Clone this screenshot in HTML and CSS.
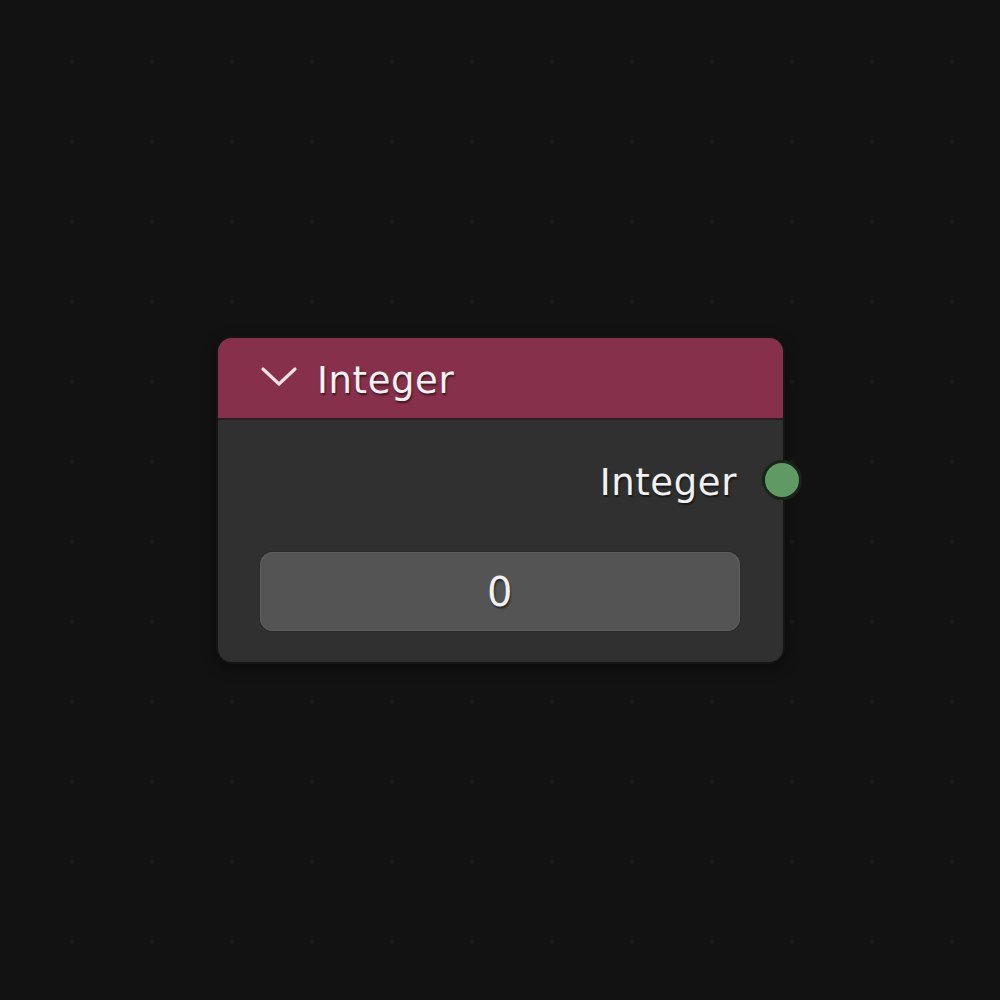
FILE: index.html
```html
<!DOCTYPE html>
<html>
<head>
<meta charset="utf-8">
<link rel="stylesheet" href="styles.css">
</head>
<body>
<div class="canvas">
  <div class="node">
    <div class="node-header">
      <svg class="chevron" width="38" height="22" viewBox="0 0 38 22"><path d="M3 3 L19 18 L35 3" fill="none" stroke="#ecdfe4" stroke-width="3.2" stroke-linecap="round" stroke-linejoin="round"/></svg>
      <span class="title">Integer</span>
    </div>
    <div class="node-body">
      <div class="output-row">
        <span class="label">Integer</span>
        <span class="socket"></span>
      </div>
      <div class="field">0</div>
    </div>
  </div>
</div>
</body>
</html>
```
FILE: styles.css
```css
html, body {
  margin: 0;
  padding: 0;
}
body {
  width: 1000px;
  height: 1000px;
  background-color: #121212;
  background-image: radial-gradient(circle at center, #1a1a1a 0, #1a1a1a 2.2px, transparent 2.8px);
  background-size: 80px 80px;
  background-position: 32px 22px;
  font-family: "DejaVu Sans", "Liberation Sans", sans-serif;
  overflow: hidden;
}
.canvas {
  position: relative;
  width: 1000px;
  height: 1000px;
}
.node {
  position: absolute;
  left: 218px;
  top: 338px;
  width: 565px;
  height: 324px;
  border-radius: 14px;
  background: #303030;
  box-shadow: 0 0 0 2px #151515, 0 4px 14px rgba(0,0,0,0.6);
  display: flex;
  flex-direction: column;
}
.node-header {
  height: 80px;
  background: #87304c;
  border-radius: 14px 14px 0 0;
  border-bottom: 2px solid #2a2022;
  display: flex;
  align-items: center;
  padding-left: 42px;
  gap: 19px;
}
.chevron {
  display: block;
  margin-top: -2px;
}
.title, .label, .field {
  color: #f0f0f0;
  font-size: 37px;
  letter-spacing: 0.6px;
  text-shadow: 1px 2px 2px rgba(0,0,0,0.55);
}
.title {
  margin-top: 4px;
}
.node-body {
  flex: 1;
  display: flex;
  flex-direction: column;
  padding: 0 43px 31px 42px;
}
.output-row {
  position: relative;
  height: 120px;
  display: flex;
  align-items: center;
  justify-content: flex-end;
  padding-right: 3px;
  padding-bottom: 10px;
  box-sizing: border-box;
}
.label {
  margin-top: 14px;
}
.socket {
  position: absolute;
  right: -62px;
  top: 40px;
  width: 34px;
  height: 34px;
  border-radius: 50%;
  background: #5f9a63;
  border: 3px solid #1b231b;
}
.field {
  margin-top: 12px;
  height: 79px;
  background: #545454;
  border-radius: 13px;
  box-shadow: inset 0 0 0 1px #5e5e5e, 0 0 0 1px #2a2a2a;
  display: flex;
  align-items: center;
  justify-content: center;
  font-size: 40px;
  padding-left: 0;
  box-sizing: border-box;
}
```
